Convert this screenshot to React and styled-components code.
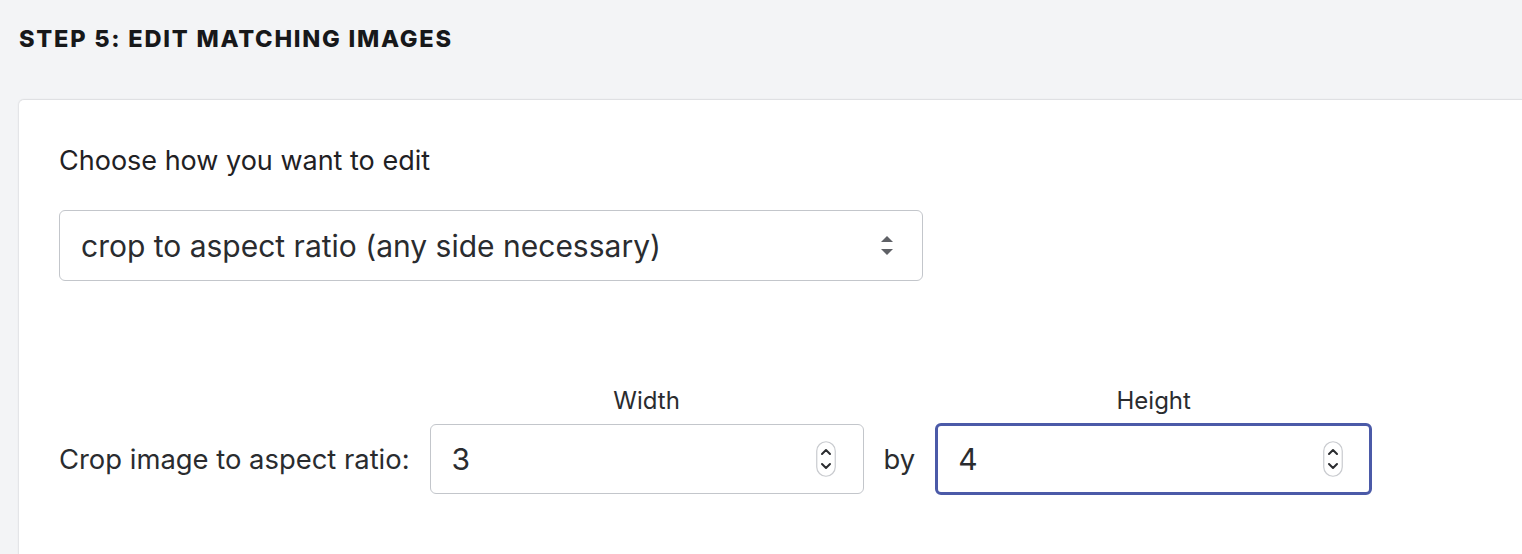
import React from "react";
import styled, { createGlobalStyle } from "styled-components";

const Global = createGlobalStyle`
  html, body { margin: 0; padding: 0; }
  body {
    background: #f3f4f6;
    font-family: Inter, "Noto Sans", sans-serif;
    color: #1f2124;
    overflow: hidden;
  }
`;

const Page = styled.div`
  width: 1522px;
  height: 554px;
  display: flex;
  flex-direction: column;
  box-sizing: border-box;
  padding: 0 0 0 18px;
`;

const Heading = styled.h2`
  margin: 0;
  padding: 25px 0 0 1px;
  height: 99px;
  box-sizing: border-box;
  font-size: 23.6px;
  line-height: 28px;
  font-weight: 800;
  letter-spacing: 1.75px;
  color: #17181a;
`;

const Card = styled.section`
  flex: 1;
  background: #ffffff;
  border-top: 1px solid #dfe0e3;
  border-left: 1px solid #e4e5e8;
  border-top-left-radius: 6px;
  box-shadow: 0 0 2px rgba(0, 0, 0, 0.06);
  padding: 43px 0 0 40px;
  display: flex;
  flex-direction: column;
`;

const Prompt = styled.div`
  font-size: 27px;
  line-height: 36px;
  color: #1f2124;
  margin-bottom: 31px;
`;

const Box = styled.div`
  box-sizing: border-box;
  grid-row: 2;
  grid-column: ${(p) => p.$col || "auto"};
  width: ${(p) => p.$w}px;
  height: ${(p) => p.$h}px;
  border: ${(p) => (p.$focus ? "3px solid #4b5aa8" : "1.5px solid #c3c6cb")};
  border-radius: 6px;
  background: #fff;
  display: flex;
  align-items: center;
  justify-content: space-between;
  padding: 0 ${(p) => (p.$focus ? 26 : 27)}px 0 ${(p) => (p.$focus ? 20 : 21)}px;
  font-size: 30px;
  color: #2a2c2f;
`;

const SelectBox = styled(Box)`
  padding-right: 29px;
`;

const Row = styled.div`
  margin-top: 105px;
  display: grid;
  grid-template-columns: auto auto auto auto;
  justify-content: start;
  column-gap: 20px;
  row-gap: 7px;
  align-items: center;
`;

const FieldLabel = styled.div`
  grid-row: 1;
  grid-column: ${(p) => p.$col};
  text-align: center;
  font-size: 24px;
  line-height: 30px;
  color: #2a2c2f;
`;

const Text = styled.div`
  grid-row: 2;
  grid-column: ${(p) => p.$col};
  font-size: 27.4px;
  line-height: 34px;
  color: #2a2c2f;
`;

const SelectArrows = () => (
  <svg width="12" height="20" viewBox="0 0 12 20">
    <path d="M6 0 L12 6 L0 6 Z" fill="#5f6166" />
    <path d="M0 13 L12 13 L6 19 Z" fill="#5f6166" />
  </svg>
);

const Spinner = () => (
  <svg width="20" height="36" viewBox="0 0 20 36">
    <rect x="0.75" y="0.75" width="18.5" height="34.5" rx="9.25" fill="#fff" stroke="#c9cbcf" strokeWidth="1.2" />
    <path d="M6 13 L10 9 L14 13" fill="none" stroke="#2a2c2f" strokeWidth="2" strokeLinecap="round" strokeLinejoin="round" />
    <path d="M6 23 L10 27 L14 23" fill="none" stroke="#2a2c2f" strokeWidth="2" strokeLinecap="round" strokeLinejoin="round" />
  </svg>
);

export default function App() {
  return (
    <>
      <Global />
      <Page>
        <Heading>STEP 5: EDIT MATCHING IMAGES</Heading>
        <Card>
          <Prompt>Choose how you want to edit</Prompt>
          <SelectBox $w={864} $h={71}>
            <span>crop to aspect ratio (any side necessary)</span>
            <SelectArrows />
          </SelectBox>
          <Row>
            <FieldLabel $col={2}>Width</FieldLabel>
            <FieldLabel $col={4}>Height</FieldLabel>
            <Text $col={1}>Crop image to aspect ratio:</Text>
            <Box $col={2} $w={434} $h={70}>
              <span>3</span>
              <Spinner />
            </Box>
            <Text $col={3}>by</Text>
            <Box $col={4} $w={437} $h={72} $focus>
              <span>4</span>
              <Spinner />
            </Box>
          </Row>
        </Card>
      </Page>
    </>
  );
}
